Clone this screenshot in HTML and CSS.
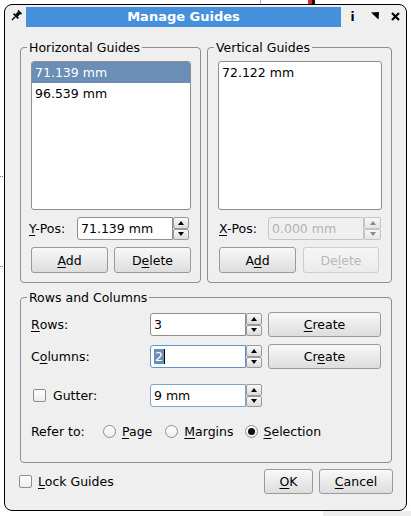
FILE: index.html
```html
<!DOCTYPE html>
<html>
<head>
<meta charset="utf-8">
<link rel="stylesheet" href="styles.css">
</head>
<body>
<div class="deco deco-guide"></div>
<div class="deco deco-red"></div>
<div class="deco deco-dot dot1"></div>
<div class="deco deco-dot dot2"></div>
<div class="deco deco-gray"></div>

<div class="window">
  <div class="titlebar">
    <span class="tb-pin">
      <svg width="12" height="12" viewBox="0 0 12 12"><g transform="rotate(45 6 6)" fill="#000"><rect x="3.5" y="0" width="5" height="1.6"/><rect x="4.4" y="1.5" width="3.2" height="3.8"/><rect x="2.6" y="5.2" width="6.8" height="1.6"/><rect x="5.4" y="6.7" width="1.2" height="5"/></g></svg>
    </span>
    <div class="tb-title">Manage Guides</div>
    <span class="tb-btn tb-info">i</span>
    <span class="tb-btn tb-menu">
      <svg width="9" height="8" viewBox="0 0 9 8"><polygon points="0,0.5 8,0 7.5,7.5" fill="#000"/></svg>
    </span>
    <span class="tb-btn tb-close">
      <svg width="9" height="9" viewBox="0 0 9 9"><path d="M1 1 L8 8 M8 1 L1 8" stroke="#000" stroke-width="2.2"/></svg>
    </span>
  </div>

  <div class="guides">
    <fieldset class="group group-h">
      <legend>Horizontal Guides</legend>
      <div class="list">
        <div class="item selected">71.139 mm</div>
        <div class="item">96.539 mm</div>
      </div>
      <div class="pos-row">
        <span class="pos-label"><u>Y</u>-Pos:</span>
        <div class="spin">
          <div class="spin-input">71.139 mm</div>
          <div class="spin-btns"><span class="sb up"></span><span class="sb down"></span></div>
        </div>
      </div>
      <div class="btn-row">
        <button class="btn"><u>A</u>dd</button>
        <button class="btn">D<u>e</u>lete</button>
      </div>
    </fieldset>

    <fieldset class="group group-v">
      <legend>Vertical Guides</legend>
      <div class="list">
        <div class="item">72.122 mm</div>
      </div>
      <div class="pos-row">
        <span class="pos-label"><u>X</u>-Pos:</span>
        <div class="spin disabled">
          <div class="spin-input">0.000 mm</div>
          <div class="spin-btns"><span class="sb up"></span><span class="sb down"></span></div>
        </div>
      </div>
      <div class="btn-row">
        <button class="btn">A<u>d</u>d</button>
        <button class="btn btn-disabled">De<u>l</u>ete</button>
      </div>
    </fieldset>
  </div>

  <fieldset class="group group-rc">
    <legend>Rows and Columns</legend>
    <div class="rc-row row-rows">
      <span class="rc-label"><u>R</u>ows:</span>
      <div class="spin">
        <div class="spin-input">3</div>
        <div class="spin-btns"><span class="sb up"></span><span class="sb down"></span></div>
      </div>
      <button class="btn btn-create"><u>C</u>reate</button>
    </div>
    <div class="rc-row row-cols">
      <span class="rc-label">C<u>o</u>lumns:</span>
      <div class="spin focus">
        <div class="spin-input"><span class="sel">2</span><span class="caret"></span></div>
        <div class="spin-btns"><span class="sb up"></span><span class="sb down"></span></div>
      </div>
      <button class="btn btn-create">Cr<u>e</u>ate</button>
    </div>
    <div class="rc-row row-gutter">
      <span class="rc-label"><span class="check"></span><span class="check-text">Gutter:</span></span>
      <div class="spin focus-soft">
        <div class="spin-input">9 mm</div>
        <div class="spin-btns"><span class="sb up"></span><span class="sb down"></span></div>
      </div>
    </div>
    <div class="rc-row row-refer">
      <span class="refer-label">Refer to:</span>
      <span class="radio-item r-page"><span class="radio"></span><span><u>P</u>age</span></span>
      <span class="radio-item r-margins"><span class="radio"></span><span><u>M</u>argins</span></span>
      <span class="radio-item r-sel"><span class="radio on"></span><span><u>S</u>election</span></span>
    </div>
  </fieldset>

  <div class="footer">
    <span class="check"></span>
    <span class="lock-text"><u>L</u>ock Guides</span>
    <span class="spacer"></span>
    <button class="btn btn-ok"><u>O</u>K</button>
    <button class="btn btn-cancel"><u>C</u>ancel</button>
  </div>
</div>
</body>
</html>
```

FILE: styles.css
```css
* { box-sizing: border-box; }
html, body { margin: 0; }
body {
  width: 411px;
  height: 516px;
  padding: 4px;
  background: #fff;
  font-family: "DejaVu Sans", "Liberation Sans", sans-serif;
  font-size: 12.5px;
  color: #000;
  position: relative;
  overflow: hidden;
}
u { text-decoration: underline; text-underline-offset: 2px; }

/* background decorations outside the window */
.deco { position: absolute; }
.deco-guide { left: 260px; top: 0; width: 1px; height: 4px; background: #a8a8ee; }
.deco-red { left: 308px; top: 0; width: 7px; height: 4px; background: linear-gradient(90deg, #d42a2a 0 4px, #111 4px); }
.deco-dot { left: 0; width: 4px; height: 1px; background: repeating-linear-gradient(90deg, #7a72c0 0 1px, transparent 1px 2px); }
.dot1 { top: 176px; }
.dot2 { top: 266px; }
.deco-gray { left: 323px; top: 511px; width: 88px; height: 5px; background: #ededed; }

.window {
  position: relative;
  width: 403px;
  height: 507px;
  border: 1px solid #000;
  border-radius: 8px;
  background: #efefef;
}

/* title bar */
.titlebar {
  display: flex;
  align-items: center;
  height: 20px;
  margin-top: 2px;
}
.tb-pin { width: 21px; display: flex; justify-content: center; margin-top: -3px; }
.tb-pin svg { display: block; }
.tb-title {
  width: 315px;
  height: 20px;
  line-height: 20px;
  background: #4590dc;
  color: #fff;
  font-weight: bold;
  font-size: 13px;
  text-align: center;
}
.tb-btn { display: flex; justify-content: center; align-items: center; }
.tb-info { width: 23px; font-weight: bold; font-size: 12px; }
.tb-menu { width: 23px; margin-top: -3px; }
.tb-close { width: 17px; margin-top: -1px; }
.tb-btn svg { display: block; }

/* group boxes */
.guides {
  display: flex;
  gap: 6px;
  margin: 13px 14px 0 15px;
}
.group {
  margin: 0;
  border: 1px solid #8e8e8e;
  border-radius: 4px;
  padding: 0 9px 9px 10px;
  min-width: 0;
}
.group legend {
  padding: 0 2px;
  margin-left: -4px;
  line-height: 15px;
}
.group-h { width: 181px; }
.group-v { width: 185px; }

.list {
  height: 149px;
  margin-top: 6px;
  border: 1px solid #8e8e8e;
  border-radius: 3px;
  background: #fff;
  overflow: hidden;
}
.item { height: 21px; line-height: 21px; padding-left: 3px; }
.item.selected { background: #6a8eb6; color: #fff; }

.pos-row {
  display: flex;
  align-items: center;
  margin-top: 7px;
}
.pos-label { width: 48px; margin-left: -2px; }
.group-v .pos-label { width: 49px; margin-left: 1px; }

.spin { display: flex; height: 23px; }
.spin-input {
  width: 96px;
  height: 23px;
  border: 1px solid #8e8e8e;
  border-radius: 3px 0 0 3px;
  background: #fff;
  padding-left: 3px;
  line-height: 21px;
  white-space: nowrap;
  display: flex;
  align-items: center;
}
.spin-btns { width: 16px; display: flex; flex-direction: column; }
.group-v .spin-btns { width: 17px; }
.sb {
  flex: 1;
  border: 1px solid #9a9a9a;
  border-radius: 2px;
  background: linear-gradient(#f8f8f8, #dcdcdc);
  display: flex;
  align-items: center;
  justify-content: center;
}
.sb::before { content: ""; width: 0; height: 0; border-left: 3.5px solid transparent; border-right: 3.5px solid transparent; }
.sb.up::before { border-bottom: 4px solid #000; }
.sb.down::before { border-top: 4px solid #000; }

.spin.disabled .spin-input { background: #efefef; border-color: #c4c4c4; color: #b4b4b4; }
.spin.disabled .sb { border-color: #c4c4c4; background: linear-gradient(#f6f6f6, #e6e6e6); }
.spin.disabled .sb.up::before { border-bottom-color: #8a8a8a; }
.spin.disabled .sb.down::before { border-top-color: #8a8a8a; }

.btn-row { display: flex; gap: 6px; margin-top: 7px; }
.group-v .btn-row { gap: 7px; margin-left: 1px; }
.btn {
  font: inherit;
  color: #000;
  width: 77px;
  height: 26px;
  padding: 0;
  border: 1px solid #9a9a9a;
  border-radius: 3px;
  background: linear-gradient(#f8f8f8, #dddddd);
}
.group-v .btn-disabled { width: 76px; }
.btn-disabled { color: #b8b8b8; border-color: #cdcdcd; background: linear-gradient(#f6f6f6, #ebebeb); }

/* rows and columns */
.group-rc {
  width: 372px;
  margin: 7px 0 0 15px;
  padding-bottom: 21px;
}
.rc-row { display: flex; align-items: center; }
.rc-label { width: 119px; display: flex; align-items: center; }
.row-rows { height: 25px; margin-top: 7px; }
.row-cols { height: 25px; margin-top: 7px; }
.row-gutter { height: 23px; margin-top: 15px; }
.row-refer { height: 20px; margin-top: 14px; }
.btn-create { width: 113px; height: 25px; margin-left: 6px; }

.spin.focus .spin-input { border-color: #5d93d0; }
.spin.focus-soft .spin-input { border-color: #7ea3cd; }
.sel { background: #6a8eb6; color: #fff; line-height: 15px; padding: 0 1px; }
.caret { width: 1px; height: 15px; background: #000; }

.check {
  width: 13px;
  height: 13px;
  border: 1px solid #8e8e8e;
  border-radius: 2px;
  background: linear-gradient(#ffffff, #ececec);
  flex: none;
}
.row-gutter .check { margin-left: 2px; }
.check-text { margin-left: 7px; }

.refer-label { width: 72px; }
.radio-item { display: flex; align-items: center; gap: 6px; }
.r-page { margin-right: 13px; }
.r-margins { margin-right: 11px; }
.radio {
  width: 13px;
  height: 13px;
  border: 1px solid #8e8e8e;
  border-radius: 50%;
  background: linear-gradient(#ffffff, #ececec);
  display: flex;
  align-items: center;
  justify-content: center;
}
.radio.on::before { content: ""; width: 7px; height: 7px; border-radius: 50%; background: #111; }

/* footer */
.footer {
  display: flex;
  align-items: center;
  height: 25px;
  margin: 6px 13px 0 14px;
}
.lock-text { margin-left: 6px; }
.spacer { flex: 1; }
.btn-ok { width: 49px; height: 25px; }
.btn-cancel { width: 74px; height: 25px; margin-left: 6px; }
```
